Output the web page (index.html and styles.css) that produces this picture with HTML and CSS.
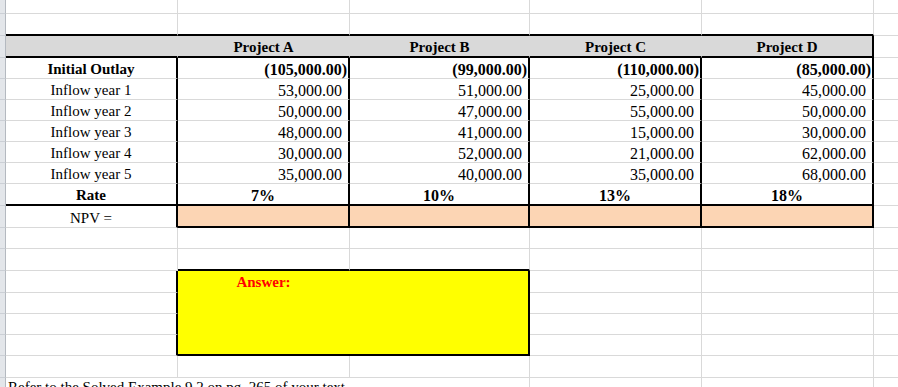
FILE: index.html
```html
<!DOCTYPE html>
<html>
<head>
<meta charset="utf-8">
<link rel="stylesheet" href="styles.css">
</head>
<body>
<div class="sheet">
  <!-- row 1 -->
  <div class="g"></div><div class="c"></div><div class="c"></div><div class="c"></div><div class="c"></div><div class="c"></div><div class="c"></div>
  <!-- row 2 -->
  <div class="g"></div><div class="c bb"></div><div class="c bb"></div><div class="c bb"></div><div class="c bb"></div><div class="c bb"></div><div class="c"></div>
  <!-- header -->
  <div class="g"></div>
  <div class="c hd bb"></div>
  <div class="c hd bb">Project A</div>
  <div class="c hd bb">Project B</div>
  <div class="c hd bb">Project C</div>
  <div class="c hd bb br">Project D</div>
  <div class="c"></div>
  <!-- initial outlay -->
  <div class="g"></div>
  <div class="c lbl b br">Initial Outlay</div>
  <div class="c num neg br">(105,000.00)</div>
  <div class="c num neg br">(99,000.00)</div>
  <div class="c num neg br">(110,000.00)</div>
  <div class="c num neg br">(85,000.00)</div>
  <div class="c"></div>
  <!-- inflow 1 -->
  <div class="g"></div>
  <div class="c lbl br">Inflow year 1</div>
  <div class="c num br">53,000.00</div>
  <div class="c num br">51,000.00</div>
  <div class="c num br">25,000.00</div>
  <div class="c num br">45,000.00</div>
  <div class="c"></div>
  <!-- inflow 2 -->
  <div class="g"></div>
  <div class="c lbl br">Inflow year 2</div>
  <div class="c num br">50,000.00</div>
  <div class="c num br">47,000.00</div>
  <div class="c num br">55,000.00</div>
  <div class="c num br">50,000.00</div>
  <div class="c"></div>
  <!-- inflow 3 -->
  <div class="g"></div>
  <div class="c lbl br">Inflow year 3</div>
  <div class="c num br">48,000.00</div>
  <div class="c num br">41,000.00</div>
  <div class="c num br">15,000.00</div>
  <div class="c num br">30,000.00</div>
  <div class="c"></div>
  <!-- inflow 4 -->
  <div class="g"></div>
  <div class="c lbl br">Inflow year 4</div>
  <div class="c num br">30,000.00</div>
  <div class="c num br">52,000.00</div>
  <div class="c num br">21,000.00</div>
  <div class="c num br">62,000.00</div>
  <div class="c"></div>
  <!-- inflow 5 -->
  <div class="g"></div>
  <div class="c lbl br">Inflow year 5</div>
  <div class="c num br">35,000.00</div>
  <div class="c num br">40,000.00</div>
  <div class="c num br">35,000.00</div>
  <div class="c num br">68,000.00</div>
  <div class="c"></div>
  <!-- rate -->
  <div class="g"></div>
  <div class="c lbl b br bb">Rate</div>
  <div class="c rate br bb">7%</div>
  <div class="c rate br bb">10%</div>
  <div class="c rate br bb">13%</div>
  <div class="c rate br bb">18%</div>
  <div class="c"></div>
  <!-- npv -->
  <div class="g"></div>
  <div class="c lbl br">NPV =</div>
  <div class="c npv br bb"></div>
  <div class="c npv br bb"></div>
  <div class="c npv br bb"></div>
  <div class="c npv br bb"></div>
  <div class="c"></div>
  <!-- row 12 -->
  <div class="g"></div><div class="c"></div><div class="c"></div><div class="c"></div><div class="c"></div><div class="c"></div><div class="c"></div>
  <!-- row 13 -->
  <div class="g"></div><div class="c"></div><div class="c bb"></div><div class="c bb"></div><div class="c"></div><div class="c"></div><div class="c"></div>
  <!-- rows 14-17 with answer box -->
  <div class="g"></div><div class="c br"></div>
  <div class="ans"><div class="ans-text">Answer:</div></div>
  <div class="c"></div><div class="c"></div><div class="c"></div>
  <div class="g"></div><div class="c br"></div><div class="c"></div><div class="c"></div><div class="c"></div>
  <div class="g"></div><div class="c br"></div><div class="c"></div><div class="c"></div><div class="c"></div>
  <div class="g"></div><div class="c br"></div><div class="c"></div><div class="c"></div><div class="c"></div>
  <!-- row 18 -->
  <div class="g"></div><div class="c"></div><div class="c"></div><div class="c"></div><div class="c"></div><div class="c"></div><div class="c"></div>
  <!-- row 19 -->
  <div class="g"></div>
  <div class="c note">Refer to the Solved Example 9.2 on pg. 265 of your text</div>
  <div class="c"></div><div class="c"></div><div class="c"></div>
</div>
</body>
</html>
```

FILE: styles.css
```css
html, body {
  margin: 0;
  padding: 0;
  background: #ffffff;
}

body {
  width: 898px;
  height: 387px;
  overflow: hidden;
  font-family: "Liberation Serif", "Times New Roman", serif;
  color: #000000;
}

.sheet {
  display: grid;
  grid-template-columns: 6px 172px 172px 180px 172px 172px 100px;
  grid-template-rows: 14px 22px 22px 21px 21px 21px 21px 21px 21px 22px 22px 21px 22px 22px 21px 21px 21px 22px 22px;
}

.g {
  box-sizing: border-box;
  background: #e3e6ea;
  border-right: 1px solid #b4b9c0;
  border-bottom: 1px solid #cbcfd5;
}

.c {
  box-sizing: border-box;
  border-right: 1px solid #d9d9d9;
  border-bottom: 1px solid #d9d9d9;
  display: flex;
  align-items: flex-end;
  white-space: nowrap;
  line-height: 17px;
  font-size: 15px;
  min-width: 0;
}

.bb {
  border-bottom: 2px solid #000000;
}

.br {
  border-right: 2px solid #000000;
}

.hd {
  background: #d9d9d9;
  border-right-color: #d9d9d9;
  justify-content: center;
  font-weight: bold;
}

.hd.br {
  border-right-color: #000000;
}

.lbl {
  justify-content: center;
}

.b {
  font-weight: bold;
}

.num {
  justify-content: flex-end;
  font-size: 16px;
  padding-right: 6px;
}

.neg {
  padding-right: 1px;
  font-weight: bold;
}

.rate {
  justify-content: center;
  font-weight: bold;
  font-size: 16px;
}

.npv {
  background: #fcd5b4;
}

.ans {
  grid-column: 3 / 5;
  grid-row: 14 / 18;
  box-sizing: border-box;
  background: #ffff00;
  border-right: 2px solid #000000;
  border-bottom: 2px solid #000000;
}

.ans-text {
  width: 171px;
  text-align: center;
  padding-top: 3px;
  line-height: 17px;
  font-size: 15px;
  font-weight: bold;
  color: #ff0000;
}

.note {
  grid-column: 2 / 5;
  padding-left: 2px;
  align-items: flex-start;
  padding-top: 1px;
}
```
